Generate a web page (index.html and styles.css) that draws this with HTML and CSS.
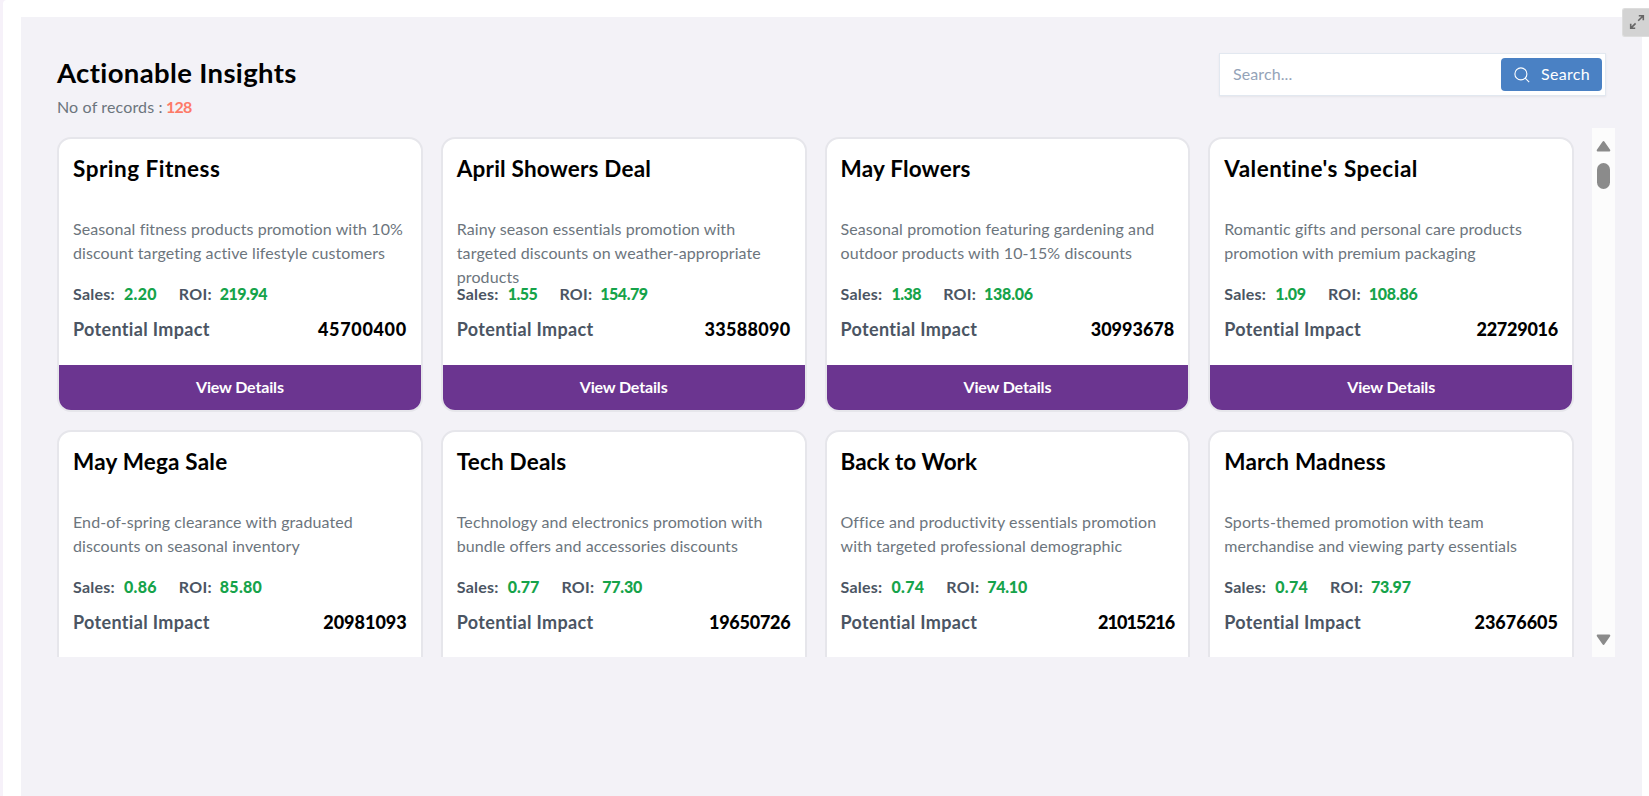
FILE: index.html
```html
<!DOCTYPE html>
<html lang="en">
<head>
<meta charset="utf-8">
<title>Actionable Insights</title>
<link rel="stylesheet" href="styles.css">
</head>
<body>
<div class="frame">
  <main class="panel">
    <header class="header">
      <div class="heading">
        <h1 class="title">Actionable Insights</h1>
        <p class="records">No of records : <b class="count">128</b></p>
      </div>
      <div class="search">
        <input class="search-input" type="text" placeholder="Search...">
        <button class="search-button">
          <svg class="search-icon" viewBox="0 0 16 16"><circle cx="6.9" cy="6.9" r="6"/><path d="M11.2 11.2 15.2 15.2"/></svg>
          <span>Search</span>
        </button>
      </div>
    </header>
    <div class="scroller">
      <section class="grid">
        <article class="card">
          <h2 class="name name-loose">Spring Fitness</h2>
          <p class="desc">Seasonal fitness products promotion with 10% discount targeting active lifestyle customers</p>
          <div class="stats"><span>Sales:</span><b class="loose">2.20</b><span class="roi">ROI:</span><b class="tight">219.94</b></div>
          <div class="impact"><span>Potential Impact</span><b class="wide">45700400</b></div>
          <button class="details">View Details</button>
        </article>
        <article class="card">
          <h2 class="name">April Showers Deal</h2>
          <p class="desc">Rainy season essentials promotion with targeted discounts on weather-appropriate products</p>
          <div class="stats"><span>Sales:</span><b class="tight">1.55</b><span class="roi">ROI:</span><b class="tight">154.79</b></div>
          <div class="impact"><span>Potential Impact</span><b class="loose">33588090</b></div>
          <button class="details">View Details</button>
        </article>
        <article class="card">
          <h2 class="name">May Flowers</h2>
          <p class="desc">Seasonal promotion featuring gardening and outdoor products with 10-15% discounts</p>
          <div class="stats"><span>Sales:</span><b class="tight">1.38</b><span class="roi">ROI:</span><b class="snug">138.06</b></div>
          <div class="impact"><span>Potential Impact</span><b>30993678</b></div>
          <button class="details">View Details</button>
        </article>
        <article class="card">
          <h2 class="name name-loose">Valentine's Special</h2>
          <p class="desc">Romantic gifts and personal care products promotion with premium packaging</p>
          <div class="stats"><span>Sales:</span><b class="snug">1.09</b><span class="roi">ROI:</span><b class="snug">108.86</b></div>
          <div class="impact"><span>Potential Impact</span><b class="snug">22729016</b></div>
          <button class="details">View Details</button>
        </article>
        <article class="card">
          <h2 class="name">May Mega Sale</h2>
          <p class="desc">End-of-spring clearance with graduated discounts on seasonal inventory</p>
          <div class="stats"><span>Sales:</span><b class="loose">0.86</b><span class="roi">ROI:</span><b class="loose">85.80</b></div>
          <div class="impact"><span>Potential Impact</span><b>20981093</b></div>
        </article>
        <article class="card">
          <h2 class="name">Tech Deals</h2>
          <p class="desc">Technology and electronics promotion with bundle offers and accessories discounts</p>
          <div class="stats"><span>Sales:</span><b>0.77</b><span class="roi">ROI:</span><b class="snug">77.30</b></div>
          <div class="impact"><span>Potential Impact</span><b class="snug">19650726</b></div>
        </article>
        <article class="card">
          <h2 class="name name-snug">Back to Work</h2>
          <p class="desc">Office and productivity essentials promotion with targeted professional demographic</p>
          <div class="stats"><span>Sales:</span><b class="loose">0.74</b><span class="roi">ROI:</span><b class="snug">74.10</b></div>
          <div class="impact"><span>Potential Impact</span><b class="narrow">21015216</b></div>
        </article>
        <article class="card">
          <h2 class="name">March Madness</h2>
          <p class="desc">Sports-themed promotion with team merchandise and viewing party essentials</p>
          <div class="stats"><span>Sales:</span><b class="loose">0.74</b><span class="roi">ROI:</span><b class="snug">73.97</b></div>
          <div class="impact"><span>Potential Impact</span><b>23676605</b></div>
        </article>
      </section>
      <div class="scrollbar">
        <svg class="arrow" viewBox="0 0 15 12"><path d="M7.5 2 13.3 10.4H1.7Z"/></svg>
        <div class="thumb"></div>
        <svg class="arrow" viewBox="0 0 15 12"><path d="M7.5 10 13.3 1.6H1.7Z"/></svg>
      </div>
    </div>
  </main>
  <button class="expand" aria-label="Expand">
    <svg viewBox="0 0 16 16"><path d="M9.2 6.8 13.7 2.3M9.8 1.7H14.3V6.2M6.6 9.4 2.1 13.9M1.7 9.7V14.2H6.2"/></svg>
  </button>
</div>
</body>
</html>
```
FILE: styles.css
```css
* { box-sizing: border-box; }

body {
  margin: 0;
  height: 796px;
  padding-left: 3px;
  overflow: hidden;
  background: #f6f1f9;
  font-family: Lato, "Liberation Sans", sans-serif;
  font-size: 16px;
  color: #000;
}

h1, h2, p { margin: 0; }
button { border: 0; font-family: inherit; padding: 0; }

.frame {
  position: relative;
  height: 796px;
  padding: 17px 7px 0 18px;
  background: #fff;
  border-top-left-radius: 4px;
}

.panel {
  height: 779px;
  padding: 36px 27px 0 36px;
  background: #f3f2f7;
}

.header {
  display: flex;
  justify-content: space-between;
  height: 75px;
  padding-right: 9px;
}

.title {
  padding-top: 3px;
  font-size: 27.5px;
  line-height: 34px;
  font-weight: 700;
  letter-spacing: 0.36px;
}

.records {
  margin-top: 5px;
  line-height: 24px;
  color: #6c757d;
  letter-spacing: 0.15px;
}

.count {
  margin-left: -1px;
  color: #fd7a68;
  letter-spacing: -0.7px;
}

.search {
  display: flex;
  align-items: center;
  width: 387px;
  height: 43px;
  padding: 0 3px 0 13px;
  background: #fff;
  border: 1px solid #e2e8f0;
  box-shadow: 0 1px 2px rgba(0, 0, 0, 0.06);
}

.search-input {
  flex: 1;
  min-width: 0;
  padding: 0 0 2px;
  border: 0;
  outline: 0;
  background: none;
  font: inherit;
  letter-spacing: 0.1px;
}
.search-input::placeholder { color: #94a3b8; }

.search-button {
  display: flex;
  align-items: center;
  gap: 11px;
  width: 101px;
  height: 33px;
  padding-left: 13px;
  border-radius: 4px;
  background: #4a81c4;
  color: #fff;
  font-size: 16px;
  letter-spacing: 0.3px;
}
.search-button span { padding-bottom: 2px; }
.search-icon {
  width: 16px;
  height: 16px;
  fill: none;
  stroke: #fff;
  stroke-width: 1.1;
}

.scroller {
  display: flex;
  justify-content: space-between;
  height: 529px;
  overflow: hidden;
}

.grid {
  display: grid;
  grid-template-columns: repeat(4, 1fr);
  grid-auto-rows: 275px;
  gap: 18px;
  width: 1517px;
  padding-top: 9px;
}

.card {
  display: flex;
  flex-direction: column;
  border: 2px solid #e6e6eb;
  border-radius: 14px;
  background: #fff;
  overflow: hidden;
}

.name {
  height: 78px;
  padding: 14px 14px 0;
  font-size: 22.5px;
  line-height: 32px;
  font-weight: 700;
  letter-spacing: 0.2px;
}
.name-loose { letter-spacing: 0.5px; }
.name-snug { letter-spacing: 0; }

.desc {
  height: 65px;
  padding: 0 13px 0 14px;
  line-height: 23.8px;
  color: #6c757d;
  letter-spacing: 0.1px;
}

.stats {
  display: flex;
  height: 31px;
  padding: 0 14px;
  line-height: 24px;
  font-weight: 700;
  color: #4b5563;
  letter-spacing: 0.25px;
}
.stats b {
  margin-left: 9px;
  color: #16a34a;
  letter-spacing: 0;
}
.stats .roi { margin-left: 22px; }
.stats .roi + b { margin-left: 8px; }

.impact {
  display: flex;
  justify-content: space-between;
  height: 52px;
  padding: 2px 14px 0;
  font-size: 18px;
  line-height: 28px;
  font-weight: 700;
  color: #4b5563;
  letter-spacing: 0.33px;
}
.impact b {
  color: #000;
  letter-spacing: 0;
}

/* Digit spacing for the numeric values */
.card b.narrow { letter-spacing: -0.9px; }
.card b.tight { letter-spacing: -0.5px; }
.card b.snug { letter-spacing: -0.25px; }
.card b.loose { letter-spacing: 0.3px; }
.card b.wide { letter-spacing: 0.65px; }

.details {
  height: 45px;
  padding-bottom: 2px;
  background: #6b3590;
  color: #fff;
  font-size: 16px;
  font-weight: 700;
  letter-spacing: -0.15px;
}

.scrollbar {
  display: flex;
  flex-direction: column;
  align-items: center;
  justify-content: space-between;
  width: 23px;
  background: #fcfcfc;
  padding: 12px 0 11px;
}
.arrow {
  width: 15px;
  height: 12px;
  fill: #8b8b8b;
  stroke: #8b8b8b;
  stroke-width: 2;
  stroke-linejoin: round;
}
.thumb {
  width: 13px;
  height: 26px;
  margin: 11px 0 auto;
  border-radius: 7px;
  background: #8b8b8b;
}

.expand {
  position: absolute;
  top: 8px;
  right: 0;
  display: flex;
  align-items: center;
  width: 27px;
  height: 29px;
  padding: 0 0 1px 6px;
  border: 1px solid #ddd;
  border-right: 0;
  border-radius: 3px 0 0 3px;
  background: #d3d3d3;
}
.expand svg {
  width: 16px;
  height: 16px;
  fill: none;
  stroke: #666;
  stroke-width: 1.6;
}
```
